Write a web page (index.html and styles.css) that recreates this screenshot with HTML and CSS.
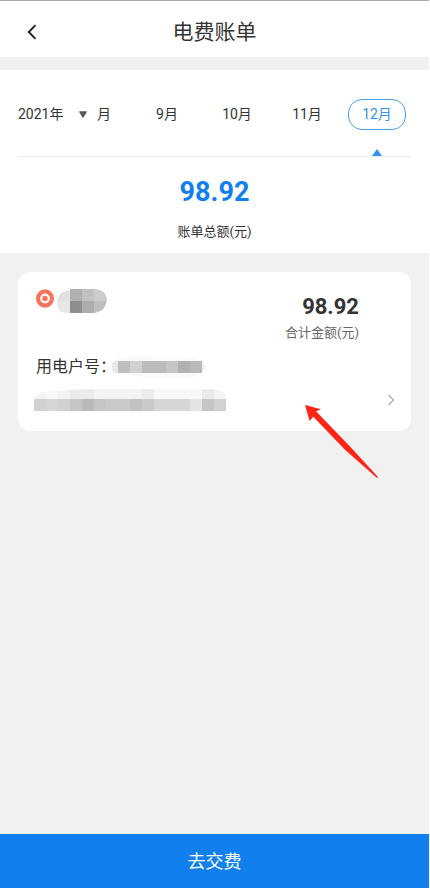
FILE: index.html
```html
<!DOCTYPE html>
<html lang="zh-CN">
<head>
<meta charset="utf-8">
<meta name="viewport" content="width=device-width, initial-scale=1">
<title>电费账单</title>
<link rel="stylesheet" href="styles.css">
</head>
<body>
<header class="topbar">
  <button class="back" type="button" aria-label="返回">
    <svg width="10" height="16" viewBox="0 0 10 16"><path d="M8.5 1.2 1.8 8l6.7 6.8" fill="none" stroke="#222" stroke-width="1.9"/></svg>
  </button>
  <h1 class="title">电费账单</h1>
</header>
<main class="content">
  <section class="summary">
    <div class="period">
      <button class="year" type="button">2021年
        <svg width="8" height="7" viewBox="0 0 8 7"><path d="M.8.3h6.4q.8 0 .6.8L4.8 6q-.8 1-1.6 0L.2 1.1Q0 .3.8.3z" fill="#555"/></svg>
      </button>
      <nav class="months">
        <button class="month month-cut" type="button">月</button>
        <button class="month" type="button">9月</button>
        <button class="month" type="button">10月</button>
        <button class="month" type="button">11月</button>
        <button class="month month-current" type="button"><span class="pill">12月</span></button>
      </nav>
    </div>
    <p class="total">98.92</p>
    <p class="total-label">账单总额(元)</p>
  </section>
  <a class="card" href="#detail">
    <div class="card-head">
      <div class="owner">
        <svg width="18" height="19" viewBox="0 0 18 19"><ellipse cx="9" cy="9.5" rx="9" ry="9.2" fill="#fb7056"/><circle cx="9" cy="9.5" r="3.8" fill="none" stroke="#fff" stroke-width="2.2"/></svg>
        <svg class="mask-name" width="50" height="24" viewBox="0 0 50 24" shape-rendering="crispEdges">
          <clipPath id="name-clip"><path d="M0 14Q0 3 13 1V0h25q11 1 12 10-1 12-12 14H7Q0 22 0 14z"/></clipPath>
          <g clip-path="url(#name-clip)">
            <path fill="#e1e1e1" d="M0 0h13v12H0z"/><path fill="#b0b0b0" d="M13 0h12v12H13z"/><path fill="#c1c1c1" d="M25 0h12v12H25z"/><path fill="#cdcdcd" d="M37 0h13v12H37z"/>
            <path fill="#e7e7e7" d="M0 12h13v12H0z"/><path fill="#8e8e8e" d="M13 12h12v12H13z"/><path fill="#adadad" d="M25 12h12v12H25z"/><path fill="#bebebe" d="M37 12h13v12H37z"/>
          </g>
        </svg>
      </div>
      <div class="amount">
        <strong class="amount-value">98.92</strong>
        <span class="amount-label">合计金额(元)</span>
      </div>
    </div>
    <div class="account">
      <span>用电户号：</span>
      <svg class="mask-account" width="95" height="26" viewBox="0 0 95 26" shape-rendering="crispEdges">
        <path fill="#fafafa" d="M3 7Q12 0 35 2l45 2q12 1 15 8-1 8-8 8l-3 4H40L3 19z"/>
        <path fill="#e9e9e9" d="M7 7v12H3q-5-6 0-12z"/><path fill="#bfbfbf" d="M7 7h12v12H7z"/><path fill="#d1d1d1" d="M19 7h12v12H19z"/><path fill="#bcbcbc" d="M31 7h24v12H31z"/><path fill="#c6c6c6" d="M55 7h12v12H55z"/><path fill="#b2b2b2" d="M67 7h12v12H67z"/><path fill="#bababa" d="M79 7h12v12H79z"/><path fill="#f1f1f1" d="M91 7q6 6 0 12z"/>
      </svg>
    </div>
    <div class="address">
      <svg class="mask-address" width="192" height="22" viewBox="0 0 192 22" shape-rendering="crispEdges">
        <clipPath id="address-clip"><path d="M0 9Q4 3 12 3L36 1l24-1h120q10 1 12 7v15H0z"/></clipPath>
        <g clip-path="url(#address-clip)">
          <path fill="#f3f3f3" d="M0 0h192v10H0z"/><path fill="#ebebeb" d="M36 0h24v10H36zM108 0h12v10h-12zM168 0h12v10h-12z"/><path fill="#f8f8f8" d="M12 0h12v10H12zM120 0h48v10h-48z"/>
          <path fill="#d1d1d1" d="M0 10h192v12H0z"/><path fill="#d6d6d6" d="M12 10h12v12H12zM120 10h36v12h-36z"/><path fill="#c5c5c5" d="M36 10h12v12H36zM60 10h12v12H60zM168 10h12v12h-12z"/><path fill="#bababa" d="M48 10h12v12H48z"/><path fill="#cacaca" d="M72 10h36v12H72zM108 10h12v12h-12z"/><path fill="#c2c2c2" d="M96 10h12v12H96z"/><path fill="#e4e4e4" d="M156 10h12v12h-12z"/>
        </g>
      </svg>
      <svg width="8" height="12" viewBox="0 0 8 12"><path d="m1.5 1 5 5-5 5" fill="none" stroke="#aaa" stroke-width="1.1"/></svg>
    </div>
    <svg class="pointer" width="74" height="74" viewBox="0 0 74 74"><path d="M1 0 17 4.3 12 6.2 46 41.5 74 72 73 73 41 44.8 9.3 11.8 5.6 16z" fill="#ff2415"/></svg>
  </a>
</main>
<footer class="footer"><button class="pay" type="button">去交费</button></footer>
</body>
</html>
```
FILE: styles.css
```css
* { box-sizing: border-box; }

body {
  margin: 0;
  padding-right: 1px;
  min-height: 100vh;
  display: flex;
  flex-direction: column;
  background: #fff;
  color: #333;
  font: 14px/20px Roboto, "Noto Sans CJK SC", sans-serif;
}

button {
  margin: 0;
  padding: 0;
  border: 0;
  background: none;
  color: inherit;
  font: inherit;
}

svg { display: block; flex: none; }
h1, p { margin: 0; }

.topbar {
  display: grid;
  grid-template-columns: 64px 1fr 64px;
  align-items: center;
  height: 57px;
  padding-top: 6px;
  border-top: 1px solid #a8a8a8;
}

.back {
  display: flex;
  align-items: center;
  height: 40px;
  padding-left: 27px;
}

.title {
  grid-column: 2;
  font-size: 21px;
  line-height: 32px;
  font-weight: 400;
  text-align: center;
}

.content {
  flex: 1;
  padding-top: 13px;
  background: #f1f1f1;
}

.summary {
  padding: 16px 18px 11px;
  background: #fff;
  text-align: center;
}

.period {
  display: flex;
  height: 71px;
  border-bottom: 1px solid #ebebeb;
}

.year {
  display: flex;
  align-items: center;
  gap: 16px;
  width: 79px;
  height: 56px;
  white-space: nowrap;
}

.months {
  flex: 1;
  display: flex;
  height: 56px;
  margin-right: -1px;
}

.month { flex: 2 1 0; }

.month-cut {
  flex: 1 1 0;
  text-align: left;
}

.month-current {
  position: relative;
  color: #3293f1;
}

.month-current::after {
  content: "";
  position: absolute;
  top: 63px;
  left: 50%;
  margin-left: -5px;
  border: 5px solid transparent;
  border-top: 0;
  border-bottom: 7px solid #3293f1;
}

.pill {
  display: inline-block;
  width: 58px;
  padding: 4px 0 5px;
  border: 1px solid #4a9fea;
  border-radius: 14px;
}

.total {
  padding-top: 18px;
  color: #1180ee;
  font-size: 27px;
  line-height: 34px;
  font-weight: 700;
}

.total-label {
  padding-top: 13px;
  font-size: 13px;
}

.card {
  position: relative;
  display: block;
  margin: 19px 18px 0;
  padding: 17px 16px 20px;
  border-radius: 12px;
  background: #fff;
  color: inherit;
  text-decoration: none;
}

.card-head {
  display: flex;
  justify-content: space-between;
  padding: 0 36px 0 2px;
}

.owner {
  display: flex;
  align-items: flex-start;
  gap: 3px;
}

.amount {
  display: flex;
  flex-direction: column;
  align-items: flex-end;
}

.amount-value {
  padding-top: 4px;
  font-size: 22px;
  line-height: 28px;
}

.amount-label {
  padding-top: 2px;
  color: #666;
  font-size: 13px;
}

.account {
  display: flex;
  align-items: center;
  height: 26px;
  margin-top: 11px;
  padding-left: 2px;
  font-size: 16px;
}

.mask-account { margin-left: -5px; }

.address {
  display: flex;
  align-items: center;
  justify-content: space-between;
  margin-top: 9px;
}

.pointer {
  position: absolute;
  top: 133px;
  right: 33px;
}

.footer {
  background: #1180ee;
  color: #fff;
}

.pay {
  width: 100%;
  height: 54px;
  padding-top: 2px;
  font-size: 18px;
}
```
